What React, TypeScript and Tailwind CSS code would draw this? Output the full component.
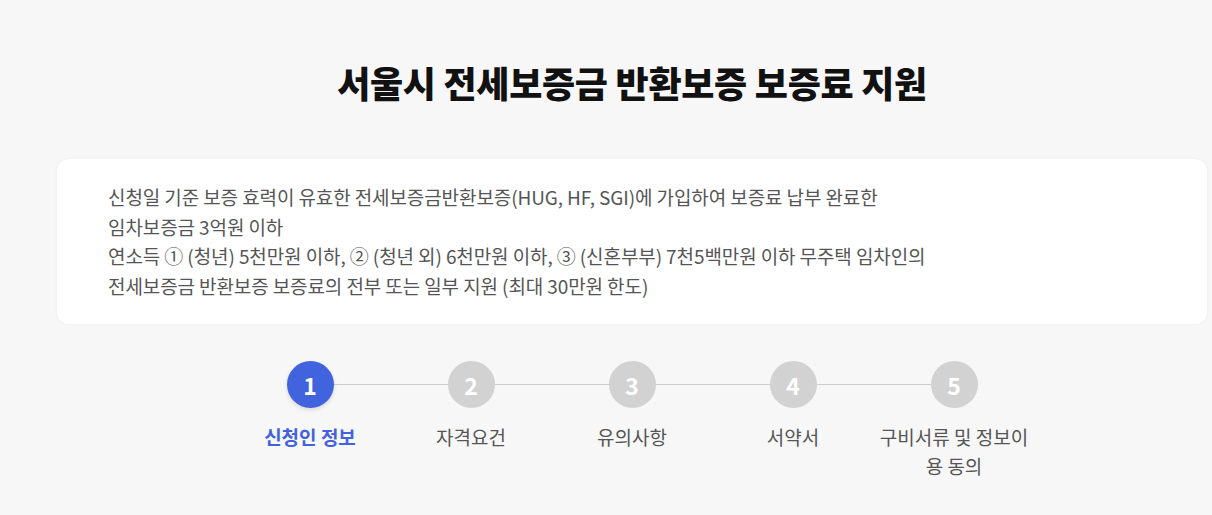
import React from "react";

const steps = [
  { n: 1, label: "신청인 정보", active: true },
  { n: 2, label: "자격요건" },
  { n: 3, label: "유의사항" },
  { n: 4, label: "서약서" },
  { n: 5, label: "구비서류 및 정보이용 동의" },
];

export default function App() {
  return (
    <div
      className="min-h-[515px] w-full bg-[#f7f7f7] overflow-hidden"
      style={{ fontFamily: '"Noto Sans CJK KR", "Noto Sans", sans-serif' }}
    >
      <div className="ml-[57px] w-[1150px]">
        <h1 className="pt-[58px] text-center text-[36px] leading-[48px] font-black tracking-[-0.3px] text-[#111]">
          서울시 전세보증금 반환보증 보증료 지원
        </h1>
        <div className="mt-[53px] rounded-[12px] bg-white pl-[51px] pt-[23px] pb-[24px] shadow-[0_0_4px_rgba(0,0,0,0.04)]">
          <p className="text-[19px] leading-[29.6px] tracking-[-0.1px] text-[#555]">
            신청일 기준 보증 효력이 유효한 전세보증금반환보증(HUG, HF, SGI)에 가입하여 보증료 납부 완료한
            <br />
            임차보증금 3억원 이하
            <br />
            연소득 ① (청년) 5천만원 이하, ② (청년 외) 6천만원 이하, ③ (신혼부부) 7천5백만원 이하 무주택 임차인의
            <br />
            전세보증금 반환보증 보증료의 전부 또는 일부 지원 (최대 30만원 한도)
          </p>
        </div>
        <div className="mt-[37px] flex justify-center">
          {steps.map((s, i) => (
            <div key={s.n} className="relative flex w-[161px] flex-col items-center">
              {i < steps.length - 1 && (
                <div className="absolute left-[80px] top-[23px] h-px w-[161px] bg-[#cccccc]" />
              )}
              <div
                className={
                  "relative z-10 flex h-[47px] w-[47px] items-center justify-center rounded-full text-[23px] font-bold text-white " +
                  (s.active ? "bg-[#4263de] shadow-[0_2px_4px_rgba(0,0,0,0.12)]" : "bg-[#d2d2d2]")
                }
              >
                {s.n}
              </div>
              <div
                className={
                  "mt-[14px] w-[158px] text-center text-[19px] leading-[29px] " +
                  (s.active ? "font-bold text-[#4262dd]" : "text-[#555]")
                }
              >
                {s.label}
              </div>
            </div>
          ))}
        </div>
      </div>
    </div>
  );
}
